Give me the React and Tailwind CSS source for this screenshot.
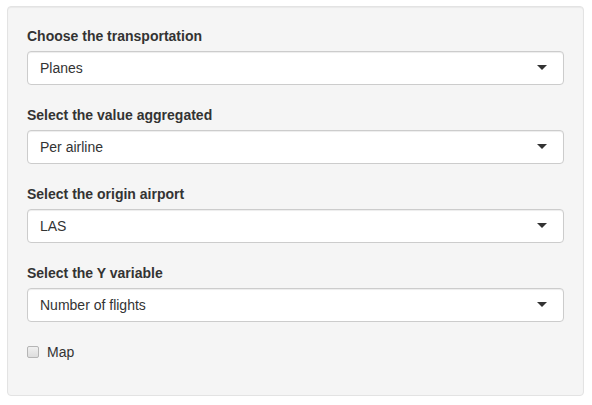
import React from "react";

const fields = [
  { label: "Choose the transportation", value: "Planes" },
  { label: "Select the value aggregated", value: "Per airline" },
  { label: "Select the origin airport", value: "LAS" },
  { label: "Select the Y variable", value: "Number of flights" },
];

function SelectBox({ value }) {
  return (
    <div className="relative h-[34px] w-full rounded-[4px] border border-[#cccccc] bg-white shadow-[inset_0_1px_1px_rgba(0,0,0,0.075)] flex items-center pl-[12px] text-[14px] text-[#333333]">
      {value}
      {/* caret */}
      <span className="absolute right-[16px] top-1/2 -mt-[3px] w-0 h-0 border-x-[5px] border-x-transparent border-t-[5px] border-t-[#333333]" />
    </div>
  );
}

export default function App() {
  return (
    <div className="min-h-screen bg-white pt-[6px] pl-[7px] font-['Liberation_Sans',Arial,sans-serif]">
      <div className="w-[577px] rounded-[4px] border border-[#e3e3e3] bg-[#f5f5f5] shadow-[inset_0_1px_1px_rgba(0,0,0,0.05)] pt-[19px] px-[19px] pb-[33px] flex flex-col gap-[20px]">
        {fields.map((f) => (
          <div key={f.label} className="flex flex-col">
            <label className="mb-[5px] text-[14px] leading-[20px] font-bold text-[#333333]">
              {f.label}
            </label>
            <SelectBox value={f.value} />
          </div>
        ))}

        {/* Map checkbox */}
        <div className="flex items-center h-[20px] text-[14px] text-[#333333]">
          <span className="w-[12px] h-[12px] rounded-[2px] border border-[#b5b5b5] bg-gradient-to-b from-[#f0f0f0] to-[#dddddd]" />
          <span className="ml-[8px]">Map</span>
        </div>
      </div>
    </div>
  );
}
